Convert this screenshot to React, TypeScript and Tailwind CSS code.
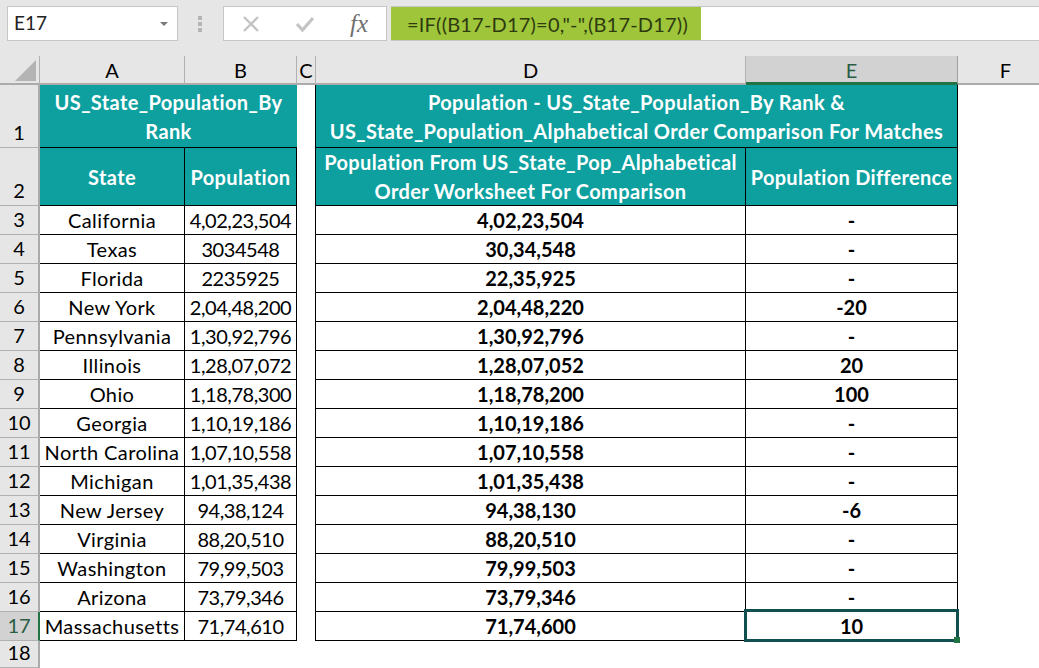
const rows: [string, string, string, string][] = [
  ['California', '4,02,23,504', '4,02,23,504', '-'],
  ['Texas', '3034548', '30,34,548', '-'],
  ['Florida', '2235925', '22,35,925', '-'],
  ['New York', '2,04,48,200', '2,04,48,220', '-20'],
  ['Pennsylvania', '1,30,92,796', '1,30,92,796', '-'],
  ['Illinois', '1,28,07,072', '1,28,07,052', '20'],
  ['Ohio', '1,18,78,300', '1,18,78,200', '100'],
  ['Georgia', '1,10,19,186', '1,10,19,186', '-'],
  ['North Carolina', '1,07,10,558', '1,07,10,558', '-'],
  ['Michigan', '1,01,35,438', '1,01,35,438', '-'],
  ['New Jersey', '94,38,124', '94,38,130', '-6'],
  ['Virginia', '88,20,510', '88,20,510', '-'],
  ['Washington', '79,99,503', '79,99,503', '-'],
  ['Arizona', '73,79,346', '73,79,346', '-'],
  ['Massachusetts', '71,74,610', '71,74,600', '10'],
];

function ColHead({ label, active }: { label: string; active?: boolean }) {
  return (
    <div
      className={
        active
          ? 'flex items-center justify-center pt-px border-r border-b-[3px] border-r-[#9e9e9e] border-b-[#217346] bg-[#d2d2d2] text-[#2a5d45] text-[20px]'
          : 'flex items-center justify-center pt-px border-r border-b-2 border-r-[#b1b1b1] border-b-[#ababab] bg-[#e6e6e6] text-[20px] text-black'
      }
    >
      {label}
    </div>
  );
}

function RowHead({ n, active }: { n: number; active?: boolean }) {
  return (
    <div
      className={
        active
          ? 'flex items-end justify-center pb-[5px] border-r-2 border-b border-r-[#217346] border-b-[#b1b1b1] bg-[#d2d2d2] text-[#2a5d45] text-[20px] leading-none'
          : 'flex items-end justify-center pb-[5px] border-r-2 border-b border-r-[#ababab] border-b-[#b1b1b1] bg-[#e6e6e6] text-[20px] leading-none text-black'
      }
    >
      {n}
    </div>
  );
}

export default function App() {
  return (
    <div className="w-[1039px] h-[668px] overflow-hidden bg-white font-['Lato',sans-serif]">
      {/* formula bar */}
      <div className="h-[56px] bg-[#e6e6e6] flex items-start pt-[6px] pl-[7px]">
        <div className="w-[171px] h-[35px] border border-[#c6c6c6] bg-white flex items-center justify-between pl-[6px] pr-[9px] text-[19px] text-[#222]">
          E17
          <span className="w-0 h-0 border-x-[4px] border-t-[4px] border-x-transparent border-t-[#7a7a7a]" />
        </div>
        <div className="w-[43px] mr-[2px] h-[35px] flex flex-col items-center justify-center gap-[2px]">
          <span className="w-[4px] h-[4px] bg-[#b4b4b4]" />
          <span className="w-[4px] h-[4px] bg-[#b4b4b4]" />
          <span className="w-[4px] h-[4px] bg-[#b4b4b4]" />
        </div>
        <div className="w-[164px] h-[35px] border border-[#c6c6c6] bg-white flex items-center">
          <svg width="18" height="18" viewBox="0 0 18 18" className="ml-[18px]">
            <path d="M2 2 L16 16 M16 2 L2 16" stroke="#c4c4c4" strokeWidth="2.4" fill="none" />
          </svg>
          <svg width="20" height="18" viewBox="0 0 20 18" className="ml-[35px]">
            <path d="M2 9 L7.5 15 L18 3" stroke="#c4c4c4" strokeWidth="3.2" fill="none" />
          </svg>
          <span className="ml-[35px] font-['Liberation_Serif',serif] italic text-[25px] leading-none text-[#6f6f6f]">fx</span>
        </div>
        <div className="ml-[4px] h-[35px] flex-1 border-y border-[#c6c6c6] bg-white flex">
          <div className="w-[310px] bg-[#9fc63b] flex items-center pl-[16px] text-[20px] tracking-[0.2px] text-[#2e3a10] whitespace-nowrap">
            =IF((B17-D17)=0,"-",(B17-D17))
          </div>
        </div>
      </div>

      {/* sheet */}
      <div className="grid grid-cols-[40px_145px_112px_19px_430px_212px_96px] grid-rows-[29px_63px_58px_repeat(15,29px)_27px] relative">
        <div className="bg-[#e6e6e6] border-r border-b-2 border-r-[#b1b1b1] border-b-[#ababab] relative">
          <svg width="22" height="22" viewBox="0 0 22 22" className="absolute left-[15px] top-[4px]">
            <path d="M21 0 L21 21 L0 21 Z" fill="#b4b4b4" />
          </svg>
        </div>
        <ColHead label="A" />
        <ColHead label="B" />
        <ColHead label="C" />
        <ColHead label="D" />
        <ColHead label="E" active />
        <ColHead label="F" />

        {/* row 1 */}
        <RowHead n={1} />
        <div className="col-span-2 bg-[#0da09f] border-b border-b-black text-white font-bold text-[20px] tracking-[0.37px] leading-[29px] text-center pt-[3px] px-2">
          US_State_Population_By Rank
        </div>
        <div />
        <div className="col-span-2 bg-[#0da09f] border-x border-b border-black -ml-px text-white font-bold text-[20px] tracking-[0.37px] leading-[29px] text-center pt-[3px] whitespace-nowrap">
          Population - US_State_Population_By Rank &amp;
          <br />
          US_State_Population_Alphabetical Order Comparison For Matches
        </div>
        <div />

        {/* row 2 */}
        <RowHead n={2} />
        <div className="bg-[#0da09f] border-r border-b border-black text-white font-bold text-[20px] tracking-[0.37px] flex items-center justify-center">
          State
        </div>
        <div className="bg-[#0da09f] border-r border-b border-black text-white font-bold text-[20px] tracking-[0.37px] flex items-center justify-center">
          Population
        </div>
        <div />
        <div className="bg-[#0da09f] border-x border-b border-black -ml-px text-white font-bold text-[20px] tracking-[0.37px] leading-[29px] flex items-center justify-center text-center">
          Population From US_State_Pop_Alphabetical
          <br />
          Order Worksheet For Comparison
        </div>
        <div className="bg-[#0da09f] border-r border-b border-black text-white font-bold text-[20px] tracking-[0.3px] flex items-center justify-center">
          Population Difference
        </div>
        <div />

        {rows.map((r, i) => (
          <div key={r[0]} className="contents">
            <RowHead n={i + 3} active={i === 14} />
            <div className="border-r border-b border-black text-[20px] tracking-[0.4px] flex items-center justify-center whitespace-nowrap">{r[0]}</div>
            <div className="border-r border-b border-black text-[20px] tracking-[-0.45px] flex items-center justify-center whitespace-nowrap">{r[1]}</div>
            <div className="border-r border-black" />
            <div className="border-r border-b border-black text-[20px] font-bold flex items-center justify-center">{r[2]}</div>
            <div className="border-r border-b border-black text-[20px] font-bold flex items-center justify-center">{r[3]}</div>
            <div />
          </div>
        ))}

        <RowHead n={18} />

        {/* selected cell outline */}
        <div className="absolute left-[744px] top-[553px] w-[215px] h-[33px] border-[3px] border-[#12504f] pointer-events-none">
          <span className="absolute -right-[4px] -bottom-[4px] w-[6px] h-[6px] bg-[#217346]" />
        </div>
      </div>
    </div>
  );
}
